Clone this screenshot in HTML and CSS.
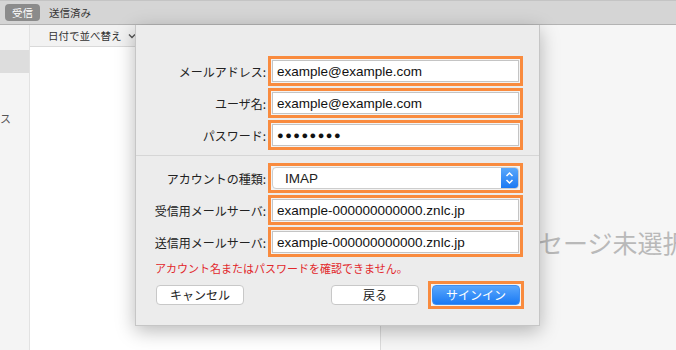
FILE: index.html
```html
<!DOCTYPE html>
<html lang="ja">
<head>
    <meta charset="UTF-8">
    <meta name="viewport" content="width=device-width, initial-scale=1.0">
    <title>メール</title>
    <link rel="stylesheet" href="styles.css">
</head>
<body>
    <div class="mail-app">
        <!-- Toolbar -->
        <div class="toolbar">
            <span class="tab tab-active">受信</span>
            <span class="tab">送信済み</span>
        </div>

        <div class="panes">
            <!-- Sidebar -->
            <div class="sidebar">
                <div class="sidebar-row selected"></div>
                <div class="sidebar-row label">ス</div>
            </div>

            <!-- Message list -->
            <div class="list-pane">
                <div class="list-header">
                    <span>日付で並べ替え</span>
                    <svg class="chevron" width="8" height="6" viewBox="0 0 8 6">
                        <path d="M1 1.5 L4 4.5 L7 1.5" fill="none" stroke="#555" stroke-width="1.4"/>
                    </svg>
                </div>
            </div>

            <!-- Reading pane -->
            <div class="reading-pane">
                <span class="empty-text">メッセージ未選択</span>
            </div>
        </div>

        <!-- Account sheet -->
        <div class="sheet">
            <div class="form-grid">
                <label class="field-label">メールアドレス:</label>
                <div class="highlight"><div class="text-input">example@example.com</div></div>

                <label class="field-label">ユーザ名:</label>
                <div class="highlight"><div class="text-input">example@example.com</div></div>

                <label class="field-label">パスワード:</label>
                <div class="highlight"><div class="text-input password">●●●●●●●●</div></div>
            </div>

            <div class="separator"></div>

            <div class="form-grid">
                <label class="field-label">アカウントの種類:</label>
                <div class="highlight">
                    <div class="select-input">
                        <span>IMAP</span>
                        <span class="stepper">
                            <svg width="9" height="16" viewBox="0 0 9 16">
                                <path d="M1.5 6 L4.5 3 L7.5 6 M1.5 10 L4.5 13 L7.5 10" fill="none" stroke="#fff" stroke-width="1.5"/>
                            </svg>
                        </span>
                    </div>
                </div>

                <label class="field-label">受信用メールサーバ:</label>
                <div class="highlight"><div class="text-input">example-000000000000.znlc.jp</div></div>

                <label class="field-label">送信用メールサーバ:</label>
                <div class="highlight"><div class="text-input">example-000000000000.znlc.jp</div></div>
            </div>

            <p class="error-text">アカウント名またはパスワードを確認できません。</p>

            <div class="button-row">
                <button class="btn">キャンセル</button>
                <div class="spacer"></div>
                <button class="btn">戻る</button>
                <div class="highlight btn-highlight">
                    <button class="btn btn-primary">サインイン</button>
                </div>
            </div>
        </div>
    </div>
</body>
</html>
```

FILE: styles.css
```css
/* Base Styles */
* {
    box-sizing: border-box;
    margin: 0;
    padding: 0;
}

body {
    font-family: "Liberation Sans", "Noto Sans CJK JP", sans-serif;
    background: #f6f6f6;
    color: #222222;
    width: 676px;
    height: 350px;
    overflow: hidden;
}

.mail-app {
    position: relative;
    width: 676px;
    height: 350px;
    display: flex;
    flex-direction: column;
}

/* Toolbar */
.toolbar {
    height: 25px;
    background: #d5d5d5;
    border-top: 1px solid #c4c4c4;
    border-bottom: 1px solid #b3b3b3;
    display: flex;
    align-items: center;
    gap: 9px;
    padding-left: 5px;
}

.tab {
    font-family: "Noto Sans CJK JP", sans-serif;
    font-size: 10.5px;
    color: #333333;
    line-height: 17px;
}

.tab-active {
    background: #8b8b8b;
    color: #ffffff;
    border-radius: 4px;
    padding: 0 7px;
}

/* Panes */
.panes {
    flex: 1;
    display: flex;
}

.sidebar {
    width: 30px;
    flex-shrink: 0;
    background: #f4f4f4;
    border-right: 1px solid #e2e2e2;
    padding-top: 25px;
}

.sidebar-row.selected {
    height: 23px;
    background: #dddddd;
}

.sidebar-row.label {
    margin-top: 38px;
    font-family: "Noto Sans CJK JP", sans-serif;
    font-size: 11px;
    color: #555555;
    line-height: 14px;
}

.list-pane {
    width: 351px;
    flex-shrink: 0;
    background: #ffffff;
    border-right: 1px solid #dcdcdc;
}

.list-header {
    height: 22px;
    background: #f2f2f2;
    border-bottom: 1px solid #d9d9d9;
    display: flex;
    align-items: center;
    gap: 6px;
    padding-left: 18px;
    font-family: "Noto Sans CJK JP", sans-serif;
    font-size: 10.5px;
    color: #333333;
}

.reading-pane {
    flex: 1;
    min-width: 0;
    overflow: hidden;
    background: #f6f6f6;
    padding: 199px 0 0 107px;
}

.empty-text {
    font-family: "Noto Sans CJK JP", sans-serif;
    font-size: 25px;
    color: #b9b9b9;
    white-space: nowrap;
}

/* Account sheet */
.sheet {
    position: absolute;
    left: 135px;
    top: 25px;
    width: 405px;
    height: 301px;
    background: #ececec;
    border: 1px solid #c6c6c6;
    border-top: none;
    box-shadow: 0 5px 18px rgba(0, 0, 0, 0.28);
    padding-top: 31px;
}

.form-grid {
    display: grid;
    grid-template-columns: 131px 255px;
    grid-auto-rows: 30px;
    column-gap: 2px;
    row-gap: 2px;
    margin-left: -1px;
}

.field-label {
    font-family: "Noto Sans CJK JP", sans-serif;
    font-size: 12px;
    color: #222222;
    text-align: right;
    align-self: center;
    white-space: nowrap;
}

.highlight {
    border: 3px solid #f98b3e;
    background: #f3f3f3;
    padding: 1px;
}

.text-input {
    height: 100%;
    background: #ffffff;
    border: 1px solid #c4c4c4;
    font-size: 13.5px;
    color: #111111;
    padding-left: 4px;
    display: flex;
    align-items: center;
    white-space: nowrap;
}

.text-input.password {
    font-size: 11px;
    letter-spacing: 1.5px;
}

.separator {
    height: 1px;
    background: #d6d6d6;
    margin: 5px 0 7px;
}

.select-input {
    height: 100%;
    background: #ffffff;
    border: 1px solid #cdcdcd;
    border-radius: 4px;
    display: flex;
    align-items: center;
    justify-content: space-between;
    padding-left: 12px;
    font-size: 13.5px;
    overflow: hidden;
}

.stepper {
    width: 17px;
    height: 100%;
    background: linear-gradient(#5aa8fb, #1b79f3);
    display: flex;
    align-items: center;
    justify-content: center;
}

.error-text {
    font-family: "Noto Sans CJK JP", sans-serif;
    font-size: 11px;
    color: #e2272b;
    padding-left: 19px;
    margin-top: 4px;
    line-height: 14px;
}

.button-row {
    display: flex;
    align-items: center;
    padding: 6px 15px 0 20px;
}

.spacer {
    flex: 1;
}

.btn {
    font-family: "Noto Sans CJK JP", sans-serif;
    font-size: 12px;
    width: 88px;
    height: 20px;
    background: #ffffff;
    border: 1px solid #c8c8c8;
    border-radius: 4px;
    color: #222222;
    line-height: 18px;
}

.btn-highlight {
    margin-left: 9px;
    padding: 1px;
}

.btn-primary {
    display: block;
    background: linear-gradient(#5aa7fc, #1a7af4);
    border-color: #3f8ef0;
    color: #ffffff;
}
```
